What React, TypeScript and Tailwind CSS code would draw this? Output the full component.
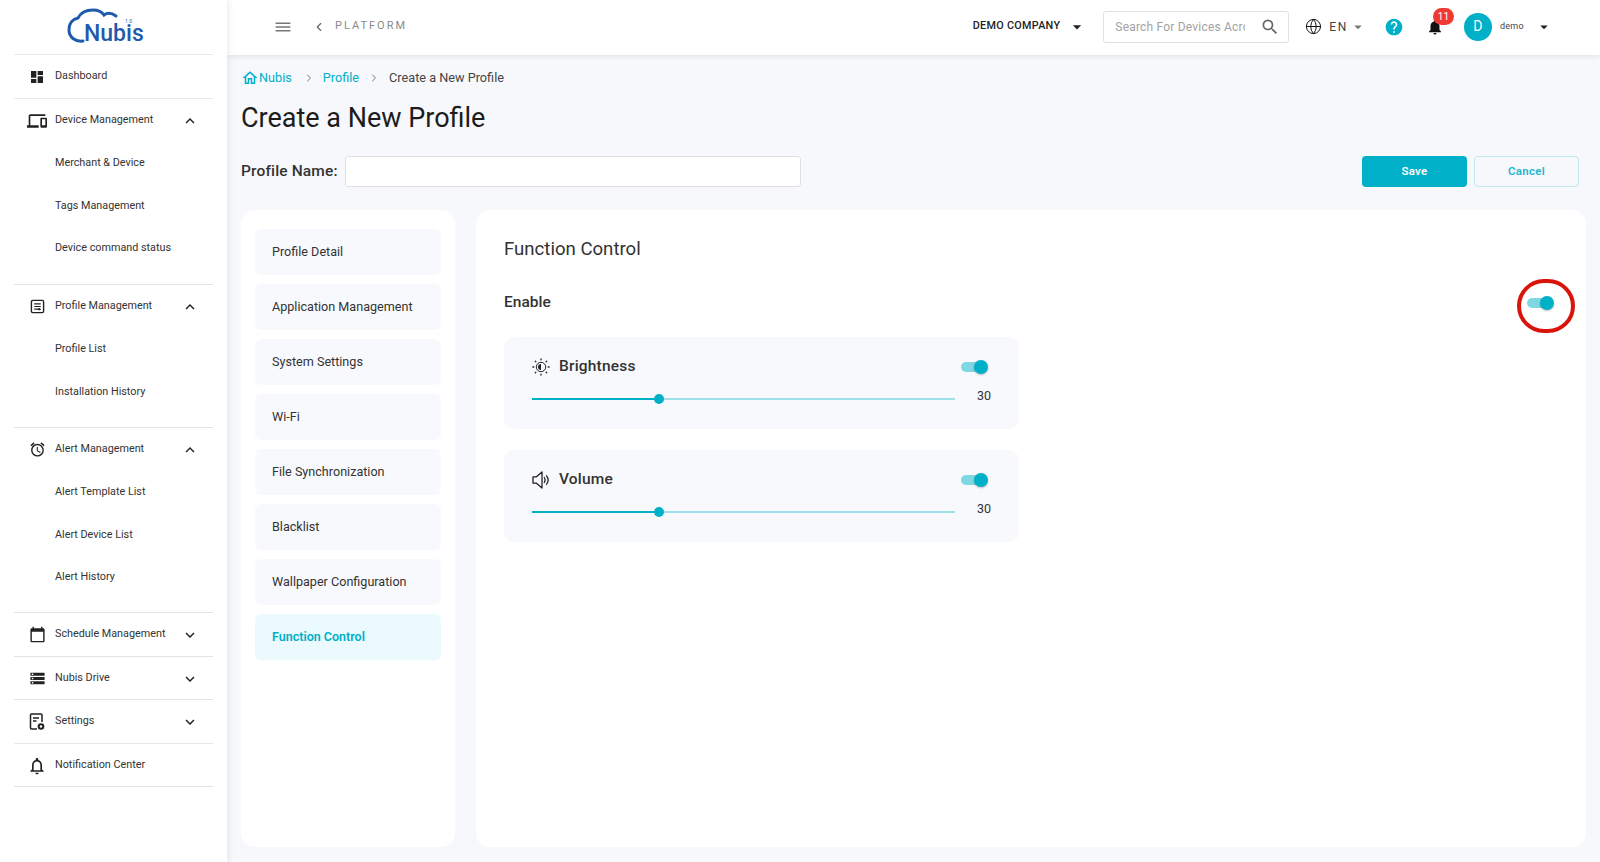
import { ChevronLeft, ChevronRight, Globe } from 'lucide-react';
import {
  MdAlarm, MdArrowDropDown, MdCalendarToday, MdDashboard, MdExpandLess, MdExpandMore, MdHelp, MdMenu,
  MdNotifications, MdNotificationsNone, MdOutlineDevices, MdOutlineHome, MdSearch, MdStorage,
} from 'react-icons/md';
import type { ReactNode } from 'react';

const teal = 'bg-[#00afc8]';

function ProfileIcon() {
  return (
    <svg width="15" height="15" viewBox="0 0 16 16" fill="none" stroke="#222" strokeWidth="1.5">
      <rect x="1.5" y="1.5" width="13" height="13" rx="1.5" />
      <path d="M4.5 5.2h7M4.5 8h7M4.5 10.8h5" strokeWidth="1.1" />
      <circle cx="10" cy="10.8" r="1.3" fill="#222" stroke="none" />
    </svg>
  );
}

function SettingsDocIcon() {
  return (
    <svg width="16" height="18" viewBox="0 0 16 18" fill="none" stroke="#222" strokeWidth="1.5">
      <path d="M8 16H2.5a1 1 0 0 1-1-1V2a1 1 0 0 1 1-1h9.5a1 1 0 0 1 1 1v7" />
      <path d="M4 5h6M4 8h3.5" strokeWidth="1.3" />
      <circle cx="12" cy="13.5" r="3.3" fill="#222" stroke="none" />
      <circle cx="12" cy="13.5" r="1.2" fill="#fff" stroke="none" />
    </svg>
  );
}

function BrightnessIcon() {
  return (
    <svg width="18" height="18" viewBox="0 0 18 18" fill="none" stroke="#222" strokeWidth="1">
      <circle cx="9" cy="9" r="4.7" />
      <path d="M9 6a3 3 0 0 0 0 6z" fill="#222" stroke="none" />
      <path strokeWidth="1.3" strokeLinecap="round" d="M9 .9v.9M9 16.2v.9M.9 9h.9M16.2 9h.9M3.3 3.3l.6.6M14.1 14.1l.6.6M3.3 14.7l.6-.6M14.1 3.9l.6-.6" />
    </svg>
  );
}

function VolumeIcon() {
  return (
    <svg width="18" height="18" viewBox="0 0 18 18" fill="none" stroke="#222" strokeWidth="1.3" strokeLinejoin="round">
      <path d="M1 5.8h3.4L10 1v16l-5.6-4.8H1z" />
      <path strokeLinecap="round" d="M12.3 6.5c1 1.6 1 3.4 0 5M14.6 4.8c2 2.6 2 5.8 0 8.4" />
    </svg>
  );
}

function NavRow({ icon, label, chevron }: { icon: ReactNode; label: string; chevron?: 'up' | 'down' }) {
  return (
    <div className="flex items-center h-[43px] pl-[9px] pr-[14px]">
      <span className="w-[28px] flex justify-center text-[#222]">{icon}</span>
      <span className="ml-[4px] flex-1 whitespace-nowrap text-[10.8px] text-[#333]">{label}</span>
      {chevron === 'up' && <MdExpandLess size={18} className="text-[#222]" />}
      {chevron === 'down' && <MdExpandMore size={18} className="text-[#222]" />}
    </div>
  );
}

function SubRow({ label }: { label: string }) {
  return <div className="h-[42.5px] pl-[41px] flex items-center text-[10.8px] text-[#333]">{label}</div>;
}

function Sidebar() {
  return (
    <aside className="w-[227px] shrink-0 bg-white shadow-[2px_0_6px_rgba(0,0,0,0.07)] z-20 px-[14px]">
      <div className="h-[55px] relative border-b border-[#e8e8ea]">
        <svg className="absolute left-[52px] top-[8px]" width="62" height="36" viewBox="0 0 62 36" fill="none" stroke="#1f5bab" strokeWidth="3">
          <path d="M17 33C9 34 3 29 3 22C3 15 7 11 12 10C15 4 21 2 27 2C33 2 36 4 38 7C42 4 46 5 50 8" strokeLinecap="round" />
        </svg>
        <span className="absolute left-[70px] top-[25px] text-[23px] leading-[18px] font-medium text-[#1f5bab]">Nubis</span>
        <span className="absolute left-[111px] top-[18px] text-[5px] leading-[6px] text-[#1f5bab]">1.0</span>
      </div>
      <div className="border-b border-[#e8e8ea]">
        <NavRow icon={<MdDashboard size={16} />} label="Dashboard" />
      </div>
      <div className="border-b border-[#e2e2e4] h-[186px]">
        <NavRow icon={<MdOutlineDevices size={20} />} label="Device Management" chevron="up" />
        <SubRow label="Merchant & Device" />
        <SubRow label="Tags Management" />
        <SubRow label="Device command status" />
      </div>
      <div className="border-b border-[#e2e2e4] h-[143px]">
        <NavRow icon={<ProfileIcon />} label="Profile Management" chevron="up" />
        <SubRow label="Profile List" />
        <SubRow label="Installation History" />
      </div>
      <div className="border-b border-[#e2e2e4] h-[185px]">
        <NavRow icon={<MdAlarm size={17} />} label="Alert Management" chevron="up" />
        <SubRow label="Alert Template List" />
        <SubRow label="Alert Device List" />
        <SubRow label="Alert History" />
      </div>
      <div className="border-b border-[#e2e2e4] h-[44px]">
        <NavRow icon={<MdCalendarToday size={17} />} label="Schedule Management" chevron="down" />
      </div>
      <div className="border-b border-[#e2e2e4] h-[43px]">
        <NavRow icon={<MdStorage size={17} />} label="Nubis Drive" chevron="down" />
      </div>
      <div className="border-b border-[#e8e8ea] h-[44px]">
        <NavRow icon={<SettingsDocIcon />} label="Settings" chevron="down" />
      </div>
      <div className="border-b border-[#e2e2e4] h-[43px]">
        <NavRow icon={<MdNotificationsNone size={20} />} label="Notification Center" />
      </div>
    </aside>
  );
}

function TopBar() {
  return (
    <header className="h-[55px] shrink-0 bg-white shadow-[0_2px_5px_rgba(0,0,0,0.08)] z-10 flex items-center pl-[47px] pr-[47px]">
      <MdMenu size={18} className="text-[#777] scale-x-[1.1] -mt-[2px]" />
      <ChevronLeft size={14} className="ml-[20px] text-[#666] -mt-[2px]" />
      <span className="ml-[9px] text-[11px] tracking-[2px] text-[#8a8a8a] -mt-[2px]">PLATFORM</span>
      <span className="ml-auto text-[10.8px] font-medium tracking-[0.3px] text-[#222] -mt-[2px]">DEMO COMPANY</span>
      <MdArrowDropDown size={20} className="ml-[7px] text-[#222] -mt-[2px]" />
      <div className="ml-[16px] w-[186px] h-[32px] flex items-center bg-white border border-[#dfe1e4] rounded-[3px] pl-[11px] pr-[8px] -mt-[2px]">
        <input
          placeholder="Search For Devices Across All Merchants"
          className="w-[130px] outline-none text-[12px] tracking-[0.2px] placeholder:text-[#a2a2a2]"
        />
        <MdSearch size={20} className="ml-auto text-[#666]" />
      </div>
      <Globe size={17} strokeWidth={1.4} className="ml-[16px] text-[#111] -mt-[2px]" />
      <span className="ml-[7px] text-[12px] tracking-[1.6px] text-[#444] -mt-[2px]">EN</span>
      <MdArrowDropDown size={18} className="ml-[1px] text-[#777] -mt-[2px]" />
      <MdHelp size={20} className="ml-[17px] text-[#00afc8] -mt-[2px]" />
      <div className="relative ml-[21px] w-[20px] flex justify-center -mt-[2px]">
        <MdNotifications size={18} className="text-[#111]" />
        <span className="absolute left-[8px] top-[-10px] w-[21px] h-[17px] rounded-full bg-[#ee3a32] text-white text-[10px] flex items-center justify-center">11</span>
      </div>
      <div className={`ml-[19px] w-[28px] h-[28px] rounded-full ${teal} text-white text-[14px] flex items-center justify-center -mt-[2px]`}>D</div>
      <span className="ml-[8px] text-[9px] tracking-[0.3px] text-[#444] -mt-[2px]">demo</span>
      <MdArrowDropDown size={18} className="ml-[11px] text-[#222] -mt-[2px]" />
    </header>
  );
}

function Toggle() {
  return (
    <div className="relative w-[27px] h-[16px] shrink-0">
      <div className="absolute left-0 top-[3px] w-[24px] h-[10px] rounded-full bg-[#7fd7e3]" />
      <div className={`absolute right-0 top-[1px] w-[14px] h-[14px] rounded-full ${teal} shadow-[0_1px_2px_rgba(0,0,0,0.25)]`} />
    </div>
  );
}

function ControlCard({ icon, label }: { icon: ReactNode; label: string }) {
  return (
    <div className="w-[515px] h-[92px] rounded-[10px] bg-[#f8f9fd] pl-[28px] pr-[31px] pt-[20px]">
      <div className="flex items-center h-[20px]">
        <span className="w-[18px] flex justify-center text-[#222]">{icon}</span>
        <span className="ml-[9px] flex-1 text-[15.5px] font-medium tracking-[0.2px] text-[#333]">{label}</span>
        <Toggle />
      </div>
      <div className="flex mt-[8px]">
        <div className="relative w-[423px] h-[20px] shrink-0">
          <div className="absolute left-0 top-[13px] w-full h-[2px] bg-[#9fe0ea]" />
          <div className={`absolute left-0 top-[13px] w-[127px] h-[2px] ${teal}`} />
          <div className={`absolute left-[122px] top-[9px] w-[10px] h-[10px] rounded-full ${teal}`} />
        </div>
        <span className="ml-[22px] mt-[1px] text-[12.5px] leading-[20px] text-[#333]">30</span>
      </div>
    </div>
  );
}

const menuItems = ['Profile Detail', 'Application Management', 'System Settings', 'Wi-Fi', 'File Synchronization', 'Blacklist', 'Wallpaper Configuration'];

export default function App() {
  return (
    <div className="flex h-[862px] w-[1600px] overflow-hidden bg-[#f7f8fc] font-['Roboto',sans-serif]">
      <Sidebar />
      <div className="flex-1 flex flex-col min-w-0">
        <TopBar />
        <main className="flex-1 pl-[14px] pr-[14px] pt-[15px] pb-[15px] flex flex-col min-h-0">
          <nav className="flex items-center h-[16px] text-[12.7px] text-[#00afc8]">
            <MdOutlineHome size={18} />
            <span>Nubis</span>
            <ChevronRight size={12} className="ml-[11px] mr-[8px] text-[#777]" />
            <span>Profile</span>
            <ChevronRight size={12} className="ml-[9px] mr-[9px] text-[#777]" />
            <span className="text-[#444]">Create a New Profile</span>
          </nav>
          <h1 className="mt-[16px] text-[27px] leading-[32px] text-[#1c1c1c]">Create a New Profile</h1>
          <div className="mt-[22px] flex items-center h-[31px]">
            <span className="text-[15.5px] font-medium tracking-[0.15px] text-[#333]">Profile Name:</span>
            <input className="ml-[7px] w-[456px] h-[31px] bg-white border border-[#e0e0e3] rounded-[3px]" />
            <button className={`ml-auto w-[105px] h-[31px] rounded-[4px] ${teal} text-white text-[11.5px] font-semibold tracking-[0.3px]`}>Save</button>
            <button className="ml-[7px] mr-[7px] w-[105px] h-[31px] rounded-[4px] border border-[#bfe9f0] text-[#22b7cd] text-[11.5px] font-semibold tracking-[0.3px]">Cancel</button>
          </div>
          <div className="mt-[23px] flex-1 flex gap-[21px] min-h-0">
            <div className="w-[214px] rounded-[14px] bg-white pt-[19px] px-[14px] flex flex-col gap-[9px]">
              {menuItems.map((item) => (
                <div key={item} className="h-[46px] rounded-[6px] bg-[#f8f9fd] pl-[17px] flex items-center text-[12.6px] text-[#333]">{item}</div>
              ))}
              <div className="h-[46px] rounded-[6px] bg-[#ebfbfd] pl-[17px] flex items-center text-[12.5px] font-semibold text-[#00afc8]">Function Control</div>
            </div>
            <div className="relative flex-1 rounded-[14px] bg-white pl-[28px] pr-[28px] pt-[28px]">
              <h2 className="text-[18.6px] leading-[22px] text-[#333]">Function Control</h2>
              <div className="mt-[32px] flex items-center justify-between h-[22px] pr-[4px]">
                <span className="text-[15.5px] font-medium text-[#333]">Enable</span>
                <Toggle />
              </div>
              <div className="mt-[23px] flex flex-col gap-[21px]">
                <ControlCard icon={<BrightnessIcon />} label="Brightness" />
                <ControlCard icon={<VolumeIcon />} label="Volume" />
              </div>
              {/* callout drawn on the screenshot */}
              <div className="absolute right-[11px] top-[69px] w-[58px] h-[54px] rounded-full border-[4px] border-[#d9150b]" />
            </div>
          </div>
        </main>
      </div>
    </div>
  );
}
